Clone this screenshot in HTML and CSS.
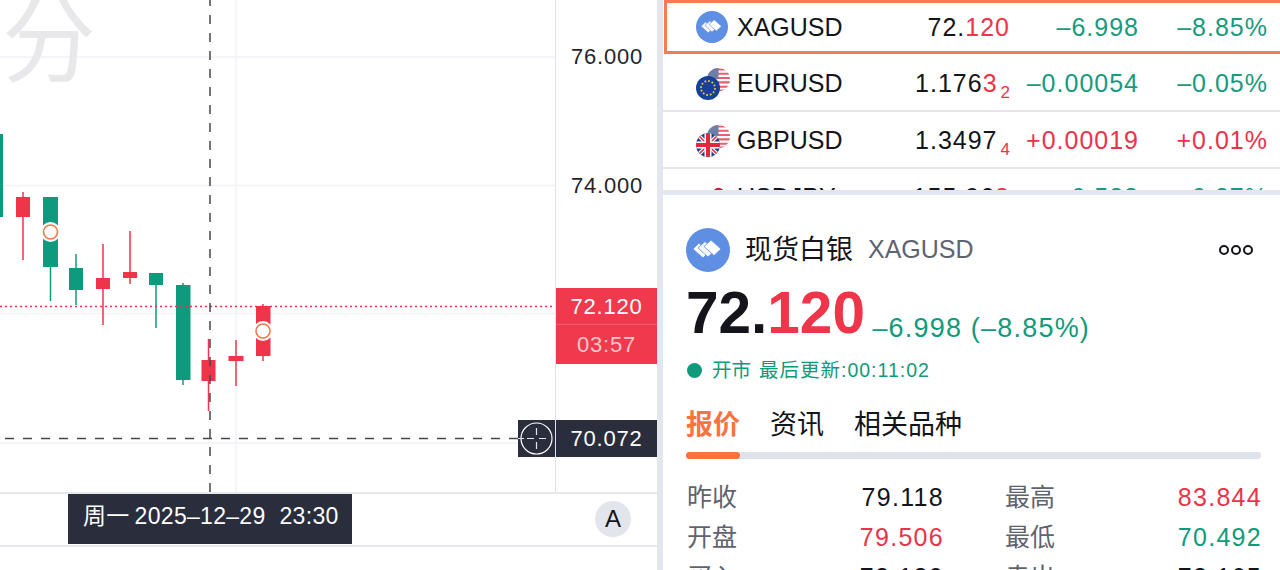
FILE: index.html
```html
<!DOCTYPE html>
<html lang="zh-CN">
<head>
    <meta charset="UTF-8">
    <title>现货白银 XAGUSD</title>
    <link rel="stylesheet" href="styles.css">
</head>
<body>

    <svg class="icon-defs" width="0" height="0">
        <defs>
            <clipPath id="clip-flag"><circle cx="12" cy="12" r="12"></circle></clipPath>
            <symbol id="icon-silver" viewBox="0 0 44 44">
                <circle cx="22" cy="22" r="22" fill="#5f8fe2"></circle>
                <path d="M13 15 L23 24 L17 30 L7 21 Z" fill="#fff" stroke="#5f8fe2" stroke-width="0.800"></path>
                <path d="M19 13.500 L29 22.500 L22 29 L12 20 Z" fill="#f2f5fc" stroke="#5f8fe2" stroke-width="0.800"></path>
                <path d="M25 12 L35 21 L28 27.500 L18 18.500 Z" fill="#fff" stroke="#5f8fe2" stroke-width="0.800"></path>
            </symbol>
            <symbol id="flag-us" viewBox="0 0 24 24">
                <g clip-path="url(#clip-flag)">
                    <rect width="24" height="24" fill="#fff"></rect>
                    <path d="M0 1.5H24M0 6H24M0 10.500H24M0 15H24M0 19.500H24M0 23.500H24" stroke="#e4606d" stroke-width="2.200"></path>
                    <rect width="12" height="11" fill="#6d7fa8"></rect>
                </g>
            </symbol>
            <symbol id="flag-eu" viewBox="0 0 24 24">
                <circle cx="12" cy="12" r="12" fill="#17409a"></circle>
                <circle cx="12" cy="12" r="7" fill="none" stroke="#e2c72e" stroke-width="1.800" stroke-dasharray="1.800 1.850"></circle>
            </symbol>
            <symbol id="flag-gb" viewBox="0 0 24 24">
                <g clip-path="url(#clip-flag)">
                    <rect width="24" height="24" fill="#23408f"></rect>
                    <path d="M0 0L24 24M24 0L0 24" stroke="#fff" stroke-width="4"></path>
                    <path d="M0 0L24 24M24 0L0 24" stroke="#e0283c" stroke-width="1.500"></path>
                    <path d="M12 0V24M0 12H24" stroke="#fff" stroke-width="7"></path>
                    <path d="M12 0V24M0 12H24" stroke="#e0283c" stroke-width="4"></path>
                </g>
            </symbol>
            <symbol id="flag-jp" viewBox="0 0 24 24">
                <circle cx="12" cy="12" r="12" fill="#fff"></circle>
                <circle cx="12" cy="12" r="6" fill="#d3163a"></circle>
            </symbol>
        </defs>
    </svg>

    <div class="page">
        <div class="chart">
            <div class="chart-main">
                <div class="plot">
                    <svg class="plot-svg" width="555" height="492" viewBox="0 0 555 492">
                        <!-- grid -->
                        <g class="grid">
                            <path d="M0 57H555M0 185.500H555M0 313.500H555M0 443H555M236 0V492"></path>
                        </g>
                        <!-- candles: wick then body -->
                        <g class="up">
                            <path class="wick" d="M23 192V260M103 244V325M130 231V284M208.500 339V411M236 340V386M263 304V361"></path>
                            <rect x="16" y="197" width="14" height="20"></rect>
                            <rect x="96" y="278" width="14" height="11"></rect>
                            <rect x="123" y="272" width="14" height="6"></rect>
                            <rect x="201.500" y="360" width="14" height="21"></rect>
                            <rect x="228.500" y="356" width="15" height="5"></rect>
                            <rect x="256" y="306" width="14.500" height="50"></rect>
                        </g>
                        <g class="down">
                            <path class="wick" d="M50.500 197V301M76 254V305M156 273V328M183 283V385"></path>
                            <rect x="-6" y="134" width="9" height="83"></rect>
                            <rect x="43" y="197" width="15" height="70"></rect>
                            <rect x="69" y="268" width="14" height="22"></rect>
                            <rect x="149" y="273" width="14" height="12"></rect>
                            <rect x="176" y="285" width="14.500" height="95"></rect>
                        </g>
                        <!-- order markers -->
                        <circle class="marker-halo" cx="50.500" cy="232" r="10"></circle>
                        <circle class="marker" cx="50.500" cy="232" r="7"></circle>
                        <circle class="marker-halo" cx="263" cy="331" r="10"></circle>
                        <circle class="marker" cx="263" cy="331" r="7"></circle>
                        <!-- last price and crosshair -->
                        <path class="last-line" d="M0 306.500H555"></path>
                        <path class="cross-line" d="M5 438.500H518M210 -3V492"></path>
                    </svg>
                    <div class="watermark">分</div>
                    <div class="cross-btn">
                        <svg width="37" height="37" viewBox="0 0 37 37">
                            <circle cx="18.500" cy="18.500" r="15.500" fill="none" stroke="#fff" stroke-width="1.200"></circle>
                            <path d="M18.500 8V15M18.500 22V29M0 18.500H6M9 18.500H16M21 18.500H28" fill="none" stroke="#e4e5ea" stroke-width="1.200"></path>
                        </svg>
                    </div>
                </div>
                <div class="price-axis">
                    <span class="axis-label axis-76">76.000</span>
                    <span class="axis-label axis-74">74.000</span>
                    <div class="last-tag">
                        <div class="last-price">72.120</div>
                        <div class="last-time">03:57</div>
                    </div>
                    <div class="cross-tag">70.072</div>
                </div>
            </div>
            <div class="time-axis">
                <div class="time-tag"><span>周一</span><span>2025–12–29</span><span>23:30</span></div>
                <div class="auto-btn">A</div>
            </div>
        </div>

        <div class="side">
            <div class="quote-list">
                <div class="quote-row active">
                    <span class="coin"><svg class="icon-silver" width="32" height="32"><use href="#icon-silver"></use></svg></span>
                    <span class="symbol">XAGUSD</span>
                    <span class="last">72.<em>120</em></span>
                    <span class="num green">–6.998</span>
                    <span class="num green">–8.85%</span>
                </div>
                <div class="quote-row">
                    <span class="coin">
                        <svg class="flag-back" width="23" height="23"><use href="#flag-us"></use></svg>
                        <svg class="flag-front" width="24" height="24"><use href="#flag-eu"></use></svg>
                    </span>
                    <span class="symbol">EURUSD</span>
                    <span class="last">1.176<em>3</em><sub>2</sub></span>
                    <span class="num green">–0.00054</span>
                    <span class="num green">–0.05%</span>
                </div>
                <div class="quote-row">
                    <span class="coin">
                        <svg class="flag-back" width="23" height="23"><use href="#flag-us"></use></svg>
                        <svg class="flag-front" width="24" height="24"><use href="#flag-gb"></use></svg>
                    </span>
                    <span class="symbol">GBPUSD</span>
                    <span class="last">1.3497<sub>4</sub></span>
                    <span class="num red">+0.00019</span>
                    <span class="num red">+0.01%</span>
                </div>
                <div class="quote-row">
                    <span class="coin">
                        <svg class="flag-back" width="23" height="23"><use href="#flag-jp"></use></svg>
                    </span>
                    <span class="symbol">USDJPY</span>
                    <span class="last">155.96<em>8</em></span>
                    <span class="num green">–0.588</span>
                    <span class="num green">–0.37%</span>
                </div>
            </div>

            <div class="detail">
                <div class="detail-head">
                    <svg width="44" height="44"><use href="#icon-silver"></use></svg>
                    <span class="detail-name">现货白银</span>
                    <span class="detail-code">XAGUSD</span>
                    <span class="more"><i></i><i></i><i></i></span>
                </div>
                <div class="detail-price">
                    <span class="big-price">72.<em>120</em></span>
                    <span class="big-change">–6.998 (–8.85%)</span>
                </div>
                <div class="market-status">
                    <i class="status-dot"></i>
                    <span>开市</span>
                    <span class="updated">最后更新:00:11:02</span>
                </div>
                <div class="tabs">
                    <span class="tab active">报价</span>
                    <span class="tab">资讯</span>
                    <span class="tab">相关品种</span>
                </div>
                <div class="tab-bar"><div class="tab-bar-fill"></div></div>
                <div class="stats">
                    <div class="stat"><span class="stat-name">昨收</span><span>79.118</span></div>
                    <div class="stat"><span class="stat-name">最高</span><span class="red">83.844</span></div>
                    <div class="stat"><span class="stat-name">开盘</span><span class="red">79.506</span></div>
                    <div class="stat"><span class="stat-name">最低</span><span class="green">70.492</span></div>
                    <div class="stat"><span class="stat-name">买入</span><span>72.120</span></div>
                    <div class="stat"><span class="stat-name">卖出</span><span>72.165</span></div>
                </div>
            </div>
        </div>
    </div>

</body>
</html>
```

FILE: styles.css
```css
* {
    box-sizing: border-box;
}

html, body {
    margin: 0;
    height: 570px;
    overflow: hidden;
}

body {
    font-family: "Liberation Sans", "Noto Sans CJK SC", sans-serif;
    background-color: #fff;
    color: #14151a;
}

em {
    font-style: normal;
    color: #f0344a;
}

.icon-defs {
    position: absolute;
}

.page {
    display: flex;
    width: 1280px;
    height: 570px;
}

.red {
    color: #e9334a;
}

.green {
    color: #109a7c;
}

/* chart */
.chart {
    width: 657px;
    flex-shrink: 0;
}

.chart-main {
    display: flex;
    height: 492px;
}

.plot {
    position: relative;
    width: 555px;
    height: 492px;
    overflow: hidden;
}

.plot-svg {
    display: block;
}

.grid path {
    fill: none;
    stroke: #f1f2f6;
    stroke-width: 1.500;
}

.up rect {
    fill: #f0344a;
}

.down rect {
    fill: #0e9b7d;
}

.wick {
    fill: none;
    stroke-width: 1.500;
}

.up .wick {
    stroke: #f0344a;
}

.down .wick {
    stroke: #0e9b7d;
}

.marker-halo {
    fill: #fff;
}

.marker {
    fill: #fff;
    stroke: #f4774a;
    stroke-width: 1.600;
}

.last-line {
    fill: none;
    stroke: #ee2f45;
    stroke-width: 1.500;
    stroke-dasharray: 2 3;
}

.cross-line {
    fill: none;
    stroke: #45474f;
    stroke-width: 1.500;
    stroke-dasharray: 9 9;
}

.watermark {
    position: absolute;
    left: 2px;
    top: -17px;
    font-size: 94px;
    line-height: 120px;
    color: #e8e8ea;
}

.cross-btn {
    position: absolute;
    left: 518px;
    top: 420px;
    width: 37px;
    height: 37px;
    background-color: #2a2d3c;
}

.price-axis {
    position: relative;
    width: 102px;
    border-left: 1.500px solid #dfe2ea;
    font-size: 22px;
    letter-spacing: 0.8px;
}

.axis-label {
    position: absolute;
    left: 15px;
    line-height: 26px;
    color: #24252b;
}

.axis-76 {
    top: 44px;
}

.axis-74 {
    top: 173px;
}

.last-tag {
    position: absolute;
    left: 0;
    top: 288px;
    width: 100%;
    background-color: #f0394d;
    color: #fff;
    text-align: center;
}

.last-price {
    height: 37px;
    line-height: 37px;
    border-bottom: 1px solid #f25c6c;
}

.last-time {
    height: 39px;
    line-height: 39px;
    color: #fbc5cb;
}

.cross-tag {
    position: absolute;
    left: 0;
    top: 420px;
    width: 100%;
    height: 37px;
    line-height: 37px;
    background-color: #2a2d3c;
    color: #fff;
    text-align: center;
}

.time-axis {
    display: flex;
    align-items: flex-start;
    height: 55px;
    padding: 0 26px 0 68px;
    border-top: 2px solid #e6e8ee;
    border-bottom: 2px solid #e6e8ee;
}

.time-tag {
    display: flex;
    width: 284px;
    height: 50px;
    padding-left: 15px;
    background-color: #2a2d3c;
    color: #fff;
    font-size: 23px;
    line-height: 45px;
    letter-spacing: 0.3px;
}

.time-tag span:nth-child(2) {
    margin: 0 14px 0 5px;
}

.auto-btn {
    width: 36px;
    height: 36px;
    margin: 7px 0 0 auto;
    border-radius: 50%;
    background-color: #e3e5ec;
    font-size: 24px;
    line-height: 36px;
    text-align: center;
}

/* right column */
.side {
    flex: 1;
    min-width: 0;
    border-left: 6px solid #e3e6ee;
    overflow: hidden;
}

.quote-list {
    height: 195px;
    border-bottom: 5px solid #e3e6ee;
    overflow: hidden;
}

.quote-row {
    display: grid;
    grid-template-columns: 41px 106px 1fr 129px 129px;
    align-items: center;
    height: 57px;
    padding: 2px 12px 0 33px;
    border-bottom: 2px solid #e3e5ea;
    font-size: 25px;
    white-space: nowrap;
}

.quote-row.active {
    height: 54px;
    margin: 0 -4px 1px 1px;
    padding: 0 13px 0 29px;
    border: 3px solid #f57c4f;
}

.coin {
    position: relative;
    display: block;
    width: 34px;
    height: 34px;
}

.icon-silver {
    display: block;
    position: absolute;
    top: 1px;
}

.flag-back {
    position: absolute;
    left: 11px;
    top: 1px;
}

.flag-front {
    position: absolute;
    left: 0;
    top: 9px;
}

.last, .num {
    text-align: right;
    letter-spacing: 1px;
}

.last sub {
    margin-left: 3px;
    font-size: 17px;
    line-height: 0;
    letter-spacing: 0;
    vertical-align: -6px;
    color: #e9334a;
}

.num.green {
    color: #179a7e;
}

/* detail panel */
.detail {
    padding: 33px 19px 0 23px;
}

.detail-head {
    display: flex;
    align-items: center;
    height: 44px;
}

.detail-name {
    margin-left: 15px;
    padding-bottom: 5px;
    font-size: 27px;
}

.detail-code {
    margin-left: 15px;
    padding-bottom: 2px;
    font-size: 25px;
    color: #5f6370;
}

.more {
    display: flex;
    gap: 2px;
    margin-left: auto;
    margin-right: 8px;
}

.more i {
    width: 10px;
    height: 10px;
    border: 2px solid #14151a;
    border-radius: 50%;
}

.detail-price {
    height: 84px;
    line-height: 82px;
    white-space: nowrap;
}

.big-price {
    font-size: 58.500px;
    font-weight: bold;
}

.big-change {
    margin-left: 3px;
    font-size: 27px;
    line-height: 1;
    letter-spacing: 1.200px;
    vertical-align: -4px;
    color: #109a7c;
}

.market-status {
    display: flex;
    align-items: center;
    gap: 8px;
    height: 28px;
    padding-bottom: 4px;
    font-size: 19.500px;
    color: #109a7c;
}

.updated {
    letter-spacing: 1px;
}

.status-dot {
    width: 15px;
    height: 15px;
    margin: 4px 2px 0 1px;
    border-radius: 50%;
    background-color: #109a7c;
}

.tabs {
    display: flex;
    gap: 30px;
    height: 56px;
    margin-top: 12px;
    font-size: 27px;
    line-height: 58px;
}

.tab.active {
    font-weight: bold;
    color: #f8733f;
}

.tab-bar {
    height: 7px;
    border-radius: 3px;
    background-color: #dfe2ea;
}

.tab-bar-fill {
    width: 54px;
    height: 7px;
    border-radius: 4px;
    background-color: #f8733f;
}

.stats {
    display: grid;
    grid-template-columns: 257px 257px;
    column-gap: 61px;
    margin-top: 18px;
}

.stat {
    display: flex;
    justify-content: space-between;
    height: 40px;
    padding-left: 1px;
    font-size: 25px;
    line-height: 40px;
    letter-spacing: 1.300px;
}

.stat span:last-child {
    margin-right: -1px;
}

.stat-name {
    color: #5f6370;
    letter-spacing: 0;
}
```
